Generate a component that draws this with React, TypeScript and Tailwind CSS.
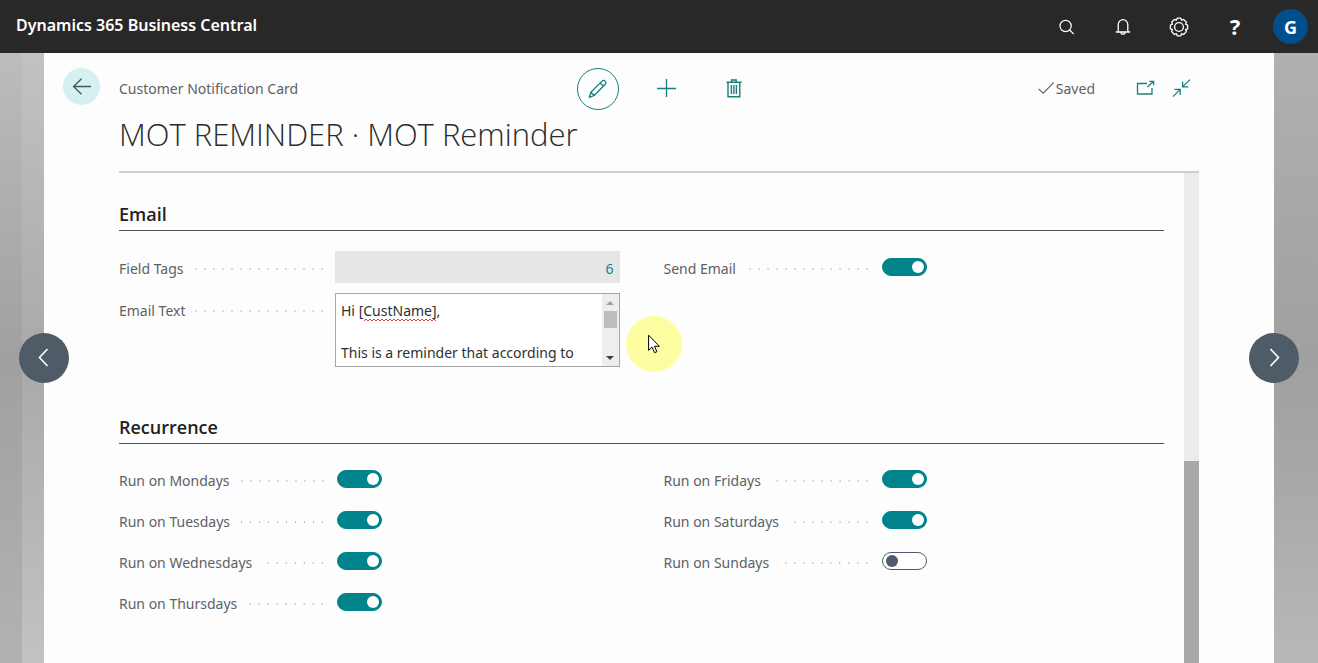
import React, { useId, useState } from "react";

function SearchIcon() {
  return (
    <svg className="size-5" viewBox="0 0 20 20" fill="none" stroke="#fff" strokeWidth="1.2">
      <circle cx="8.6" cy="9" r="5.6" />
      <path d="M12.6 13l4.2 4.2" />
    </svg>
  );
}

function BellIcon() {
  return (
    <svg className="size-5" viewBox="0 0 20 20" fill="none" stroke="#fff" strokeWidth="1.3">
      <path d="M5.2 14.6V7.8a4.8 5.2 0 0 1 9.6 0v6.8M2.8 15h14.4" />
      <path d="M8 15.2a2 2 0 0 0 4 0" />
    </svg>
  );
}

function GearIcon() {
  return (
    <svg className="size-5" viewBox="0 0 20 20" fill="none" stroke="#fff" strokeWidth="1.3" strokeLinejoin="round">
      <circle cx="10" cy="10" r="4.4" />
      <path d="M8.2 1.2h3.6l.8 2 2-.8 2.8 2.8-.9 2 2.1.9v3.7l-2.1.8.9 2-2.8 2.9-2-.9-.8 2.2H8.2l-.8-2.2-2 .9-2.8-2.9.9-2-2.1-.8V8.1l2.1-.9-.9-2 2.8-2.8 2 .8z" />
    </svg>
  );
}

function BackIcon() {
  return (
    <svg className="size-5" viewBox="0 0 20 20" fill="none" stroke="#3f5560" strokeWidth="1.3">
      <path d="M19 9.5H1.5M9.5 1.7L1.5 9.5l8 7.8" />
    </svg>
  );
}

function PencilIcon() {
  return (
    <svg className="size-5" viewBox="0 0 20 20" fill="none" stroke="#16807f" strokeWidth="1.3" strokeLinejoin="round">
      <path d="M1.3 18.3l1.6-5L14 2.1a2.2 2.2 0 0 1 3.2 0 2.2 2.2 0 0 1 0 3.2L6.2 16.5zM2.9 13.3l3.3 3.2M12.2 4l3.3 3.3" />
    </svg>
  );
}

function PlusIcon() {
  return (
    <svg className="size-5" viewBox="0 0 20 20" fill="none" stroke="#16807f" strokeWidth="1.3">
      <path d="M9.5 0v18M0 9.5h19" />
    </svg>
  );
}

function TrashIcon() {
  return (
    <svg className="size-5" viewBox="0 0 20 20" fill="none" stroke="#16807f" strokeWidth="1.4">
      <path d="M1.6 3.2h15M6.6 3V1h4.6v2M3 3.4v14.4h11.8V3.4M6.4 6v9M8.9 6v9M11.4 6v9" />
    </svg>
  );
}

function PopOutIcon() {
  return (
    <svg className="size-5" viewBox="0 0 20 20" fill="none" stroke="#16807f" strokeWidth="1.3">
      <path d="M12 4.5H2.5v10.5h14.5V9M12.4 8l6-5.4M14.4 2.4h4.2v3.8" />
    </svg>
  );
}

function CollapseIcon() {
  return (
    <svg className="size-5" viewBox="0 0 20 20" fill="none" stroke="#16807f" strokeWidth="1.3">
      <path d="M19 .6l-7.2 7M11.6 2.4v5.4h5.8M2 17.6l7-7M3.4 10.4h5.8V16" />
    </svg>
  );
}

function CheckIcon() {
  return (
    <svg className="size-4" viewBox="0 0 16 16" fill="none" stroke="#5c6166" strokeWidth="1.1">
      <path d="M.5 7.8L5.2 12.2 15.8 1.4" />
    </svg>
  );
}

function CursorIcon() {
  return (
    <svg className="h-5 w-3" viewBox="0 0 12 20" fill="#fff" stroke="#000" strokeWidth="1" strokeLinejoin="miter">
      <path d="M.6 1.2v15.2l3.5-3.3 2.5 5.6 2.3-1-2.4-5.4h4.9z" />
    </svg>
  );
}

function Chevron({ path }: { path: string }) {
  return (
    <svg className="size-5" viewBox="0 0 20 20" fill="none" stroke="#fff" strokeWidth="1.6">
      <path d={path} />
    </svg>
  );
}

function Label({ htmlFor, children }: { htmlFor: string; children: React.ReactNode }) {
  return (
    <div className="flex h-8 w-54 shrink-0 items-center pr-2">
      <label htmlFor={htmlFor} className="pt-1 text-sm whitespace-nowrap text-[#5c6166]">
        {children}
      </label>
      <span className="mt-1 ml-2 h-1 flex-1 bg-[radial-gradient(circle,#b8b8b8_1px,transparent_1px)] bg-[length:9px_4px] bg-right bg-repeat-x" />
    </div>
  );
}

function Toggle({ label, initial = true }: { label: string; initial?: boolean }) {
  const id = useId();
  const [on, setOn] = useState(initial);
  return (
    <div className="flex h-8 items-center">
      <Label htmlFor={id}>{label}</Label>
      <input
        id={id}
        type="checkbox"
        role="switch"
        checked={on}
        onChange={(e) => setOn(e.target.checked)}
        className="ml-0.5 flex h-[18px] w-[45px] appearance-none items-center rounded-full border border-[#505c6d] bg-white px-[3px] before:size-3 before:rounded-full before:bg-[#505c6d] checked:justify-end checked:border-[#00838a] checked:bg-[#00838a] checked:px-0.5 checked:before:bg-white"
      />
    </div>
  );
}

function SectionTitle({ children }: { children: React.ReactNode }) {
  return (
    <h2 className="border-b border-[#505050] pb-1 font-['Open_Sans',sans-serif] text-lg leading-6 font-semibold text-[#212121]">
      {children}
    </h2>
  );
}

const headerButtons = [
  { name: "Search", icon: <SearchIcon /> },
  { name: "Notifications", icon: <BellIcon /> },
  { name: "Settings", icon: <GearIcon /> },
];

export default function App() {
  const [text, setText] = useState("Hi [CustName],\n\nThis is a reminder that according to");
  return (
    <div className="flex min-h-screen flex-col bg-[#fdfdfd] font-['Noto_Sans','Open_Sans',sans-serif]">
      <header className="flex h-[53px] shrink-0 items-center justify-between bg-[#282828] pr-2.5 pl-4 text-white">
        <a href="#" className="pb-1 text-base font-semibold">
          Dynamics 365 Business Central
        </a>
        <div className="flex items-center gap-9">
          {headerButtons.map((b) => (
            <button key={b.name} aria-label={b.name} className="flex size-5 items-center justify-center">
              {b.icon}
            </button>
          ))}
          <button className="w-5 text-[22px] font-bold">?</button>
          <button className="-ml-2 flex size-[35px] items-center justify-center rounded-full bg-[#004e8c] text-lg font-bold">
            G
          </button>
        </div>
      </header>

      <div className="relative flex flex-1">
        <div className="w-[22px] shrink-0 bg-linear-to-b from-[#bcbcbc] via-[#a0a0a0] to-[#b2b2b2]" />
        <div className="w-[22px] shrink-0 bg-linear-to-b from-[#c2c2c2] via-[#a9a9a9] to-[#c2c2c2]" />

        <main className="flex min-w-0 flex-1 flex-col px-[75px]">
          <div className="relative border-b-2 border-[#cfcfcf] pt-3">
            <button
              aria-label="Back"
              className="absolute top-[15px] -left-14 flex size-[37px] items-center justify-center rounded-full bg-[#d6eff0]"
            >
              <BackIcon />
            </button>
            <div className="grid h-12 grid-cols-[1fr_auto_1fr] items-center">
              <span className="text-sm text-[#5c6166]">Customer Notification Card</span>
              <div className="flex items-center gap-12 pl-1">
                <button
                  aria-label="Edit"
                  className="-mr-2.5 flex size-[42px] items-center justify-center rounded-full border border-[#16807f]"
                >
                  <PencilIcon />
                </button>
                <button aria-label="New">
                  <PlusIcon />
                </button>
                <button aria-label="Delete">
                  <TrashIcon />
                </button>
              </div>
              <div className="flex items-center justify-end pr-2">
                <span className="mr-10 flex items-center gap-0.5 text-sm text-[#5c6166]">
                  <CheckIcon />
                  Saved
                </span>
                <button aria-label="Open in new window" className="mr-4">
                  <PopOutIcon />
                </button>
                <button aria-label="Collapse">
                  <CollapseIcon />
                </button>
              </div>
            </div>
            <h1 className="pb-4 font-['Open_Sans',sans-serif] text-[31px] leading-[42px] font-light text-[#2b2b2b]">
              MOT REMINDER · MOT Reminder
            </h1>
          </div>

          <div className="flex flex-1">
            <div className="min-w-0 flex-1 pt-[29px] pr-5">
              <section>
                <SectionTitle>Email</SectionTitle>
                <div className="grid grid-cols-2 gap-x-11 pt-5">
                  <div className="flex flex-col gap-2.5">
                    <div className="flex">
                      <Label htmlFor="field-tags">Field Tags</Label>
                      <input
                        id="field-tags"
                        readOnly
                        value="6"
                        className="h-8 min-w-0 flex-1 bg-[#e6e6e6] px-1.5 pt-0.5 text-right text-sm text-[#16807f]"
                      />
                    </div>
                    <div className="flex">
                      <Label htmlFor="email-text">Email Text</Label>
                      <div className="relative flex h-[74px] min-w-0 flex-1 border border-[#a6a6a6] bg-white">
                        <textarea
                          id="email-text"
                          value={text}
                          onChange={(e) => setText(e.target.value)}
                          spellCheck={false}
                          className="min-w-0 flex-1 resize-none overflow-hidden pt-1.5 pl-[5px] text-sm leading-[21px] text-[#303030] outline-none"
                        />
                        <svg className="absolute top-6 left-7 h-1 w-[72px]" fill="none" stroke="#e04848" strokeWidth="1">
                          <pattern id="squiggle" width="4" height="4" patternUnits="userSpaceOnUse">
                            <path d="M0 3l2-2 2 2" />
                          </pattern>
                          <rect width="72" height="4" fill="url(#squiggle)" stroke="none" />
                        </svg>
                        <div aria-hidden className="flex w-[17px] flex-col items-center justify-between bg-[#eeeeee] pt-[7px] pb-1.5">
                          <span className="flex flex-col items-center gap-1.5">
                            <svg className="h-1 w-2" viewBox="0 0 8 4">
                              <path d="M0 4l4-4 4 4z" fill="#a0a0a0" />
                            </svg>
                            <span className="h-[17px] w-[13px] bg-[#bdbdbd]" />
                          </span>
                          <svg className="h-1 w-2" viewBox="0 0 8 4">
                            <path d="M0 0l4 4 4-4z" fill="#404040" />
                          </svg>
                        </div>
                        <span className="pointer-events-none absolute top-[22px] left-[290px] flex size-14 items-center justify-center rounded-full bg-[#fdfda2]">
                          <CursorIcon />
                        </span>
                      </div>
                    </div>
                  </div>
                  <Toggle label="Send Email" />
                </div>
              </section>

              <section className="pt-12">
                <SectionTitle>Recurrence</SectionTitle>
                <div className="grid grid-cols-2 gap-x-11 pt-[19px]">
                  <div className="flex flex-col gap-[9px]">
                    <Toggle label="Run on Mondays" />
                    <Toggle label="Run on Tuesdays" />
                    <Toggle label="Run on Wednesdays" />
                    <Toggle label="Run on Thursdays" />
                  </div>
                  <div className="flex flex-col gap-[9px]">
                    <Toggle label="Run on Fridays" />
                    <Toggle label="Run on Saturdays" />
                    <Toggle label="Run on Sundays" initial={false} />
                  </div>
                </div>
              </section>
            </div>
            <div aria-hidden className="flex w-[15px] shrink-0 flex-col bg-[#ececec]">
              <div className="h-72 shrink-0" />
              <div className="flex-1 bg-[#a9a9a9]" />
            </div>
          </div>
        </main>

        <div className="w-11 shrink-0 bg-[linear-gradient(to_bottom,#b0b0b0,#a0a0a0_50%,#a8a8a8_70%,#b8b8b8)]" />

        <button
          aria-label="Previous record"
          className="absolute top-1/2 left-[19px] -mt-[25px] flex size-[50px] items-center justify-center rounded-full bg-[#4f5b67]"
        >
          <Chevron path="M13.5 1L5.5 9.5l8 8.5" />
        </button>
        <button
          aria-label="Next record"
          className="absolute top-1/2 right-[19px] -mt-[25px] flex size-[50px] items-center justify-center rounded-full bg-[#4f5b67]"
        >
          <Chevron path="M6.5 1l8 8.5-8 8.5" />
        </button>
      </div>
    </div>
  );
}
